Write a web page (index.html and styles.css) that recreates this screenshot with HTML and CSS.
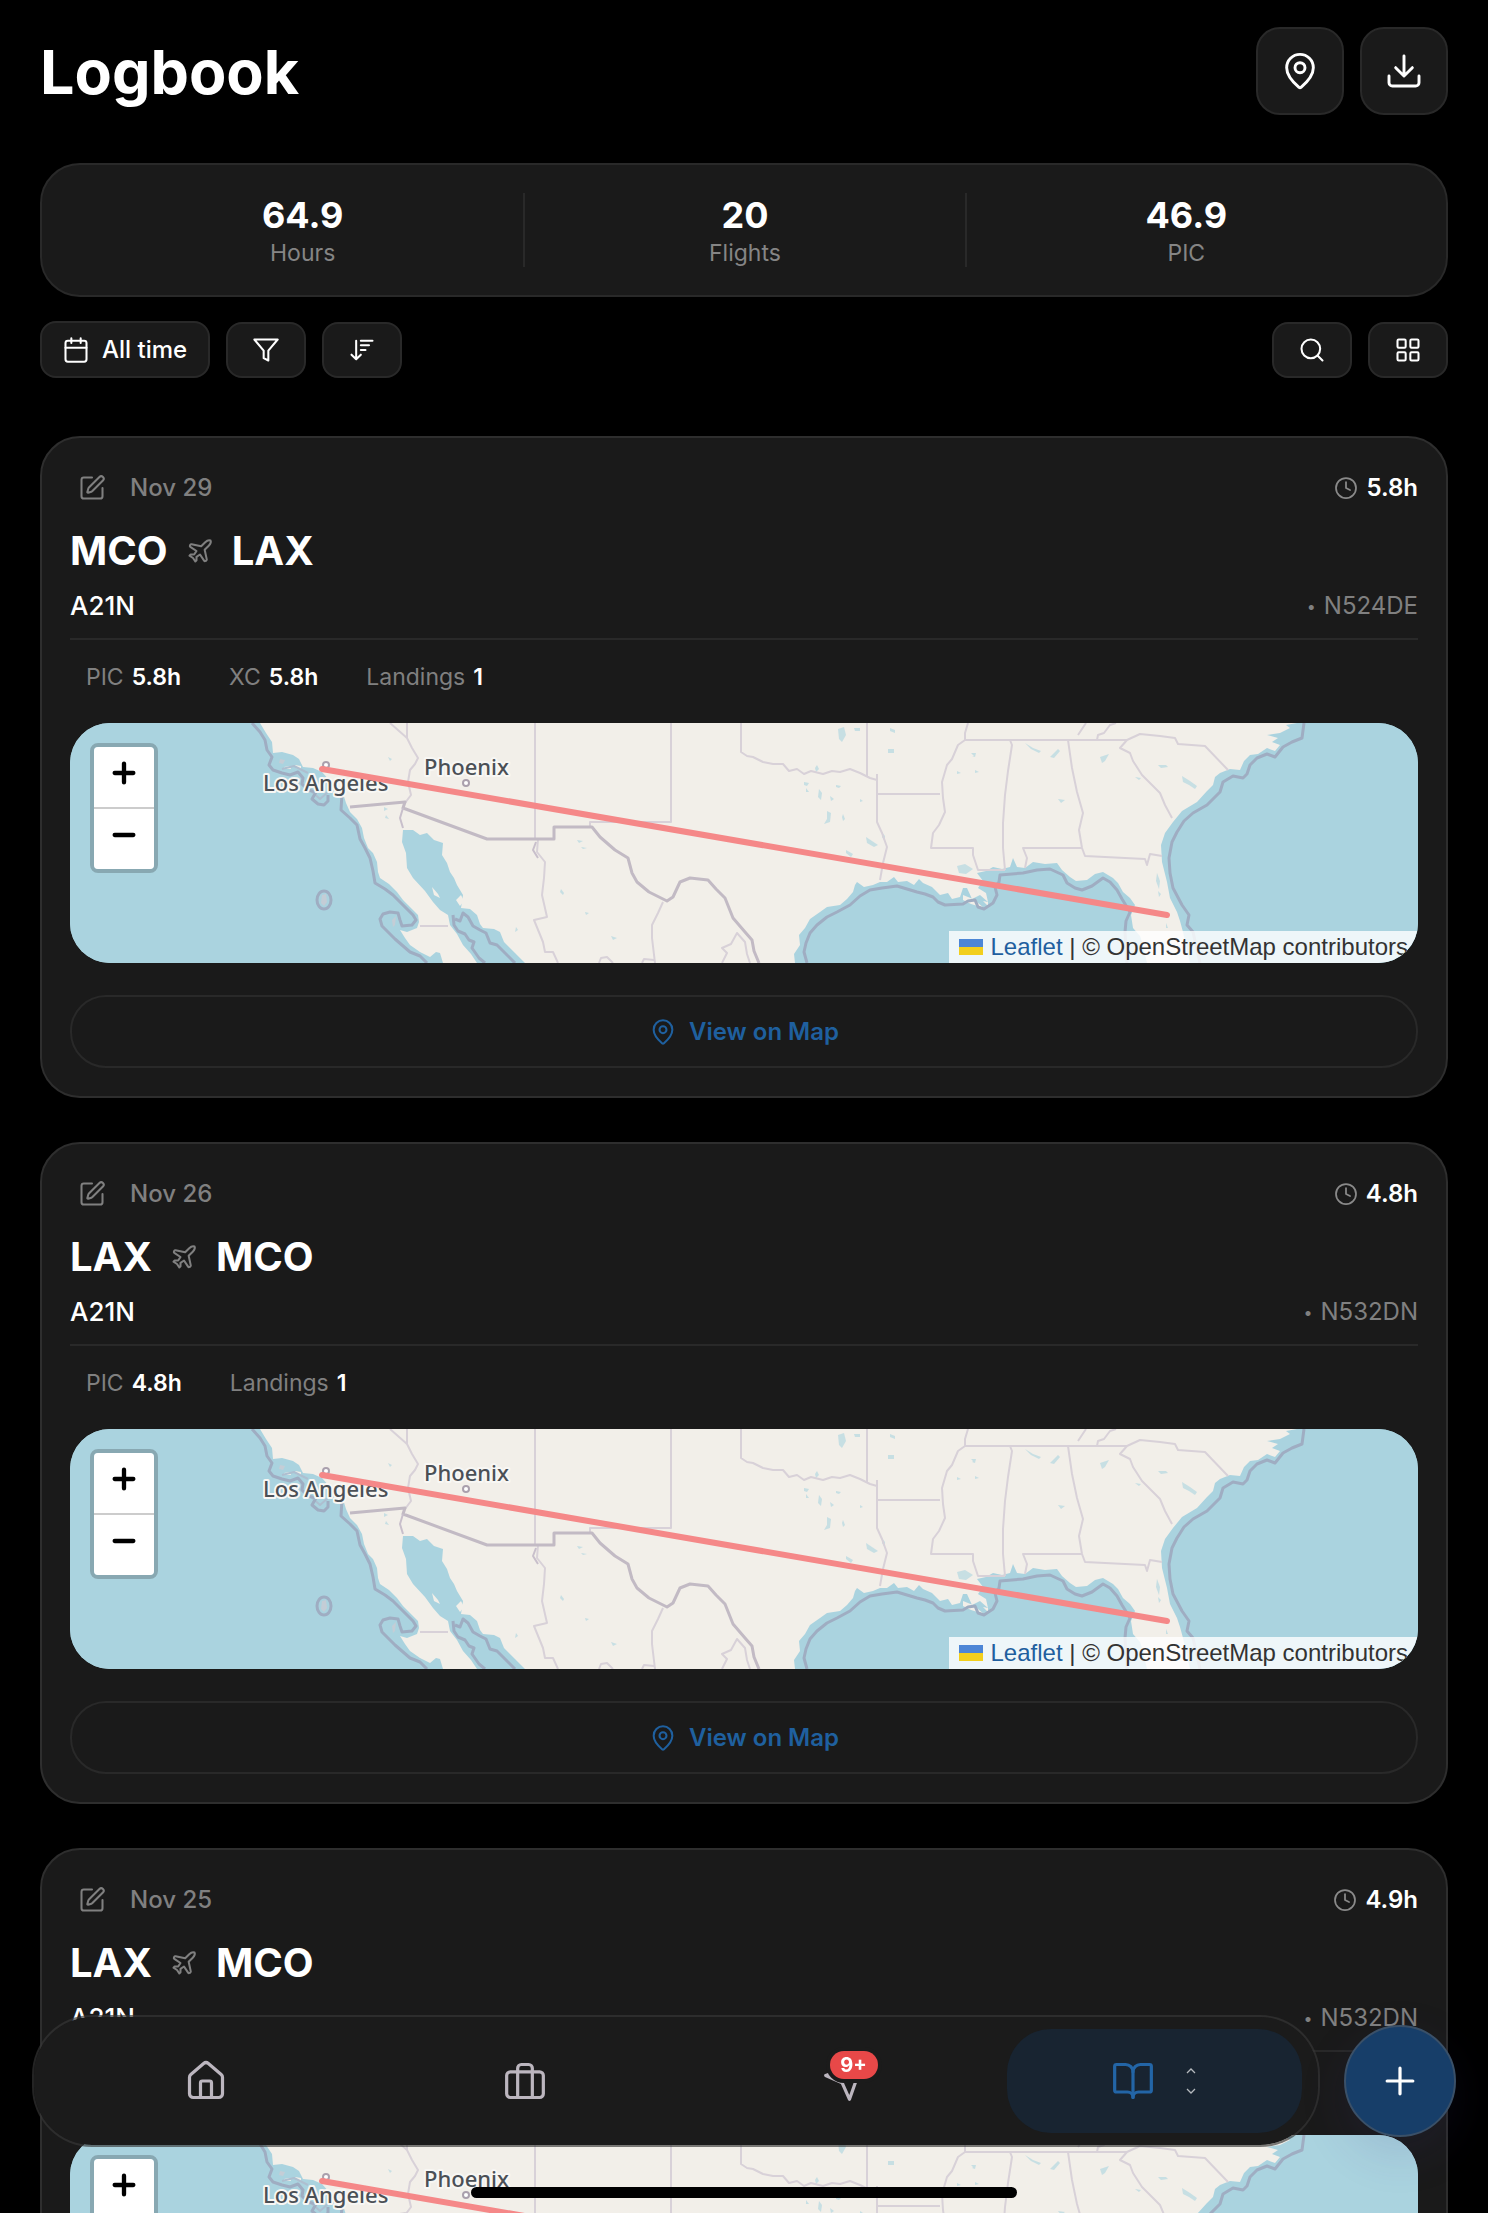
FILE: index.html
```html
<!DOCTYPE html>
<html lang="en">
<head>
<meta charset="utf-8">
<meta name="viewport" content="width=device-width, initial-scale=1">
<title>Logbook</title>
<link rel="stylesheet" href="styles.css">
</head>
<body>
<svg class="sprite" aria-hidden="true">
  <symbol id="i-pin" viewBox="0 0 24 24"><path d="M20 10c0 4.993-5.539 10.193-7.399 11.799a1 1 0 0 1-1.202 0C9.539 20.193 4 14.993 4 10a8 8 0 0 1 16 0"/><circle cx="12" cy="10" r="3"/></symbol>
  <symbol id="i-download" viewBox="0 0 24 24"><path d="M21 15v4a2 2 0 0 1-2 2H5a2 2 0 0 1-2-2v-4M7 10l5 5 5-5M12 15V3"/></symbol>
  <symbol id="i-calendar" viewBox="0 0 24 24"><path d="M8 2v4M16 2v4M3 10h18"/><rect x="3" y="4" width="18" height="18" rx="2"/></symbol>
  <symbol id="i-filter" viewBox="0 0 24 24"><path d="M22 3H2l8 9.460V19l4 2v-8.540L22 3z"/></symbol>
  <symbol id="i-sort" viewBox="0 0 24 24"><path d="m3 16 4 4 4-4M7 20V4M11 4h10M11 8h7M11 12h4"/></symbol>
  <symbol id="i-search" viewBox="0 0 24 24"><circle cx="11" cy="11" r="8"/><path d="m21 21-4.300-4.300"/></symbol>
  <symbol id="i-grid" viewBox="0 0 24 24"><rect x="3" y="3" width="7" height="7" rx="1"/><rect x="14" y="3" width="7" height="7" rx="1"/><rect x="14" y="14" width="7" height="7" rx="1"/><rect x="3" y="14" width="7" height="7" rx="1"/></symbol>
  <symbol id="i-edit" viewBox="0 0 24 24"><path d="M12 3H5a2 2 0 0 0-2 2v14a2 2 0 0 0 2 2h14a2 2 0 0 0 2-2v-7"/><path d="M18.375 2.625a1 1 0 0 1 3 3l-9.013 9.014a2 2 0 0 1-.853.505l-2.873.840a.5.5 0 0 1-.620-.620l.840-2.873a2 2 0 0 1 .506-.852z"/></symbol>
  <symbol id="i-clock" viewBox="0 0 24 24"><circle cx="12" cy="12" r="10"/><path d="M12 6v6l4 2"/></symbol>
  <symbol id="i-plane" viewBox="0 0 24 24"><path d="M17.800 19.200 16 11l3.500-3.500C21 6 21.500 4 21 3c-1-.5-3 0-4.500 1.500L13 8 4.800 6.200c-.5-.1-.9.1-1.100.5l-.3.5c-.2.5-.1 1 .3 1.300L9 12l-2 3H4l-1 1 3 2 2 3 1-1v-3l3-2 3.500 5.300c.3.4.8.5 1.300.2l.5-.2c.4-.3.6-.7.5-1.200z"/></symbol>
  <symbol id="i-home" viewBox="0 0 24 24"><path d="M15 21v-8a1 1 0 0 0-1-1h-4a1 1 0 0 0-1 1v8"/><path d="M3 10a2 2 0 0 1 .709-1.528l7-5.999a2 2 0 0 1 2.582 0l7 5.999A2 2 0 0 1 21 10v9a2 2 0 0 1-2 2H5a2 2 0 0 1-2-2z"/></symbol>
  <symbol id="i-case" viewBox="0 0 24 24"><rect x="2" y="7" width="20" height="14" rx="2"/><path d="M16 21V5a2 2 0 0 0-2-2h-4a2 2 0 0 0-2 2v16"/></symbol>
  <symbol id="i-send" viewBox="0 0 24 24"><path d="M22 2 11 13M22 2l-7 20-4-9-9-4z"/></symbol>
  <symbol id="i-book" viewBox="0 0 24 24"><path d="M12 7v14"/><path d="M3 18a1 1 0 0 1-1-1V4a1 1 0 0 1 1-1h5a4 4 0 0 1 4 4 4 4 0 0 1 4-4h5a1 1 0 0 1 1 1v13a1 1 0 0 1-1 1h-6a3 3 0 0 0-3 3 3 3 0 0 0-3-3z"/></symbol>
  <symbol id="i-plus" viewBox="0 0 24 24"><path d="M5 12h14M12 5v14"/></symbol>
  <symbol id="i-minus" viewBox="0 0 24 24"><path d="M5 12h14"/></symbol>
  <symbol id="i-updown" viewBox="0 0 16 28"><path d="m4 6 4-4 4 4M4 22l4 4 4-4"/></symbol>
  <symbol id="terrain" viewBox="0 0 1348 240">
    <rect width="1348" height="240" fill="#aad3df"/>
    <path fill="#f2efe9" d="M190 0L196 10 202 19 203 30 212 29 223 32 229 36 233 44 243 45 252 49 260 58 273 70 276 80 280 89 287 96 292 105 294 115 298 125 303 130 307 139 308 149 310 155 319 161 327 169 333 177 338 182 348 192 349 199 347 205 342 207 337 209 330 207 335 215 340 222 350 229 360 234 366 229 370 230 373 240 407 240 401 231 393 222 387 211 380 202 378 192 370 187 363 179 355 168 343 155 337 145 336 130 332 119 333 107 343 107 350 112 357 110 364 117 373 120 372 132 377 140 380 149 384 155 387 162 393 172 391 185 400 186 407 192 410 201 413 205 424 206 430 209 434 219 445 230 455 240 725 240 724 231 730 222 729 212 735 205 740 196 750 189 757 184 770 182 777 176 783 169 785 162 787 159 794 164 803 162 810 159 817 159 824 154 828 159 837 158 844 162 849 156 853 160 862 164 870 172 878 170 882 176 890 174 893 165 897 165 902 176 910 172 918 179 916 170 908 165 913 158 907 150 916 148 923 144 932 146 940 144 943 135 947 144 955 145 963 139 975 141 987 140 992 147 1000 154 1006 158 1017 157 1025 151 1033 149 1043 155 1048 160 1053 169 1060 175 1065 182 1061 192 1063 205 1070 213 1072 219 1077 240 1120 240 1113 209 1110 198 1107 189 1100 175 1097 159 1092 139 1091 122 1095 110 1103 99 1112 88 1127 79 1137 68 1143 62 1145 54 1150 50 1160 46 1170 47 1174 38 1180 32 1188 31 1197 25 1205 28 1210 22 1202 19 1208 15 1197 12 1210 10 1220 5 1216 2 1227 0Z"/>
    <g fill="#aad3df" opacity=".6">
      <path d="M768 6l6-2 2 8-4 7-3-3zM784 5l6 0 0 3-5 0zM818 26l6 0 0 4-6 0zM820 5l5 2 0 3-5-2zM747 42l2 4-3 3-1-4zM734 59l5 1-2 3-3-1zM749 66l3 4-1 7-3-3zM736 65l3 4-3 0zM757 88l4 2-1 9-6 2 3-5zM760 73l4 3-3 2zM773 91l2 5-2 2-1-4zM796 114l6 4 6 4-4 2-7-4zM776 127l7 4-2 3-5-4zM812 109l3 4 0 6-3-5zM766 62l5 1-2 2-3-1zM507 117l6 1-4 2zM511 124l6 1-4 1zM491 166l3 4-1 2-3-3zM515 189l4 1-3 2zM541 213l6 2-4 2zM446 204l2 3-3 2zM887 143l8-2 8 5-7 5-7-1zM887 48l4 2-4 1zM902 33l4-3-1 4zM901 30l5 0-2 3zM1030 34l9-3-4 7-3 2zM1088 42l8 0 2 2-7 1zM1112 53l8 5 7 5-2 3-6-4-6-3zM980 34l8-8 2 2-6 7zM955 20l8 5 8 3-2 2-8-4zM988 76l7 1-4 3zM905 47l4 2-4 1zM1087 150l3 8-1 8-3-8zM1088 168l3 3-2 3zM1096 200l2 5-2 0zM314 84l4 2-4 2zM316 92l3 4-4-1zM318 34l4 2-2 2zM1065 54l6 1-2 2zM790 76l3 2-3 1z"/>
    </g>
    <g fill="#f2efe9"><path d="M214 44l6-1 1 3-6 0zM225 42l6 1 0 3-5-1zM362 164l6 7 2 4-6-3zM386 177l5-5 3 6-4 5zM893 172l10 4 11 9-13-4-8-4zM913 178l5 1 0 4z"/></g>
    <path fill="#c4cdd6" d="M252 172l4-1 1 8-3 4-3-3zM322 197l4-4-1 9-2 2zM210 36l5 1-2 4-4-1z"/>
    <g class="map-halo"><path d="M212 46l12-3 14 7M240 67l10 9 8-7"/></g>
    <g class="map-state">
      <path d="M320 0L337 15M337 0L337 15 342 25 348 35 345 41 340 47 338 59 341 72 335 80M465 0V116M601 0V99H520V104M671 0V29L677 33 683 34 693 39 703 41 713 41 719 48 727 46 734 51 741 48 753 51 762 48 770 49 780 46 790 50 800 55 807 57M797 0V54M807 51V99L812 110 817 124 813 140 810 157M807 71H870M898 0L895 10 895 17H1057L1050 25 1060 30 1063 38 1072 52 1082 62 1090 70 1095 82 1102 95M895 17L888 22 882 36 877 42 872 59 873 75 875 89 869 102 863 110 861 125H903V132L908 147H935M940 17L942 22 938 48 935 72 933 100 933 125 935 147M998 17L1002 45 1007 69 1013 90 1009 107 1012 125 1015 133 1075 136 1077 142 1080 131 1092 133M1012 125H953L957 135 955 145M1057 17L1070 11 1090 13 1105 15 1108 21 1135 23 1158 47M1027 17L1028 12 1034 10 1040 2 1046 0M1008 12L1016 0"/>
      <path d="M468 116L467 129 475 139 474 155 472 172 477 194 464 197 473 219 475 229 483 229 488 240M593 179L588 190 582 202 582 215 585 240M572 240l2-4 10 1M529 240l2-5 6-1 6 6M652 240L657 230 652 225 661 221 667 210 675 219 677 231 680 240M350 203H378"/>
    </g>
    <path class="map-border" d="M280 84L335 79 333 85 417 116H484V104H522L530 114 545 127 558 135 562 150 567 159 579 169 597 178 603 174 610 159 620 155 638 157 646 166 655 175 663 195 675 209 682 217 684 228 689 240"/>
    <path class="map-line" d="M333 85L330 95 333 105M466 119l-3 8 5 8"/>
    <g class="map-shore">
      <path d="M182 0L190 9 195 17 197 27 202 34 199 42 203 47 212 50 220 52 228 49 233 55 232 61 238 67 246 69 242 76 248 81 254 82 258 78 258 72M272 70L271 87 280 95 287 102 290 116 295 125 300 135 303 148 305 160 315 166 323 172 333 182 343 192 346 197 342 202 332 203 330 197 328 190 320 189 313 191 310 196 312 203 325 216 340 229 350 233 357 240M383 192L384 202 388 208 395 211 399 217 404 219 402 225 409 235 415 240M385 196L390 198 393 190 398 194 403 203 410 207 416 210 420 220 427 222 435 230 445 240"/>
      <path d="M737 240L734 229 736 220 740 210 747 202 757 194 767 189 780 182 790 173 800 167 812 165 827 163 837 166 847 169 855 171 863 174 868 179 875 182 893 181 898 178 905 177 908 184 914 186 923 180 927 172 925 164 929 159 930 152 953 150 967 147 980 146 993 152 997 160 1005 165 1012 167 1022 163 1033 155 1040 159 1047 167 1052 176 1060 189 1056 198 1055 209 1057 240M1130 240L1123 209 1117 202 1119 192 1112 182 1103 165 1100 150 1099 135 1102 119 1107 109 1114 98 1123 90 1137 82 1150 69 1153 59 1163 53 1173 55 1177 51 1180 42 1187 35 1197 31 1205 34 1213 24 1222 19 1232 15 1234 0"/>
      <ellipse cx="254" cy="177" rx="7" ry="9"/>
    </g>
  </symbol>
</svg>

<main class="app">
  <header class="top">
    <h1>Logbook</h1>
    <div class="top-actions">
      <button class="big-btn" type="button" aria-label="Map"><svg class="ic ic-40"><use href="#i-pin"/></svg></button>
      <button class="big-btn" type="button" aria-label="Export"><svg class="ic ic-40"><use href="#i-download"/></svg></button>
    </div>
  </header>

  <section class="stats">
    <div class="stat"><strong>64.9</strong><span>Hours</span></div>
    <div class="stat"><strong>20</strong><span>Flights</span></div>
    <div class="stat"><strong>46.9</strong><span>PIC</span></div>
  </section>

  <div class="toolbar">
    <button class="tool tool-wide" type="button"><svg class="ic ic-28"><use href="#i-calendar"/></svg>All time</button>
    <button class="tool" type="button" aria-label="Filter"><svg class="ic ic-28"><use href="#i-filter"/></svg></button>
    <button class="tool" type="button" aria-label="Sort"><svg class="ic ic-28"><use href="#i-sort"/></svg></button>
    <span class="spacer"></span>
    <button class="tool" type="button" aria-label="Search"><svg class="ic ic-28"><use href="#i-search"/></svg></button>
    <button class="tool" type="button" aria-label="Grid view"><svg class="ic ic-28"><use href="#i-grid"/></svg></button>
  </div>

  <div class="flights">
    <article class="card">
      <div class="row head">
        <button class="edit" type="button" aria-label="Edit flight"><svg class="ic ic-28"><use href="#i-edit"/></svg></button>
        <time>Nov 29</time>
        <span class="dur"><svg class="ic ic-24"><use href="#i-clock"/></svg>5.8h</span>
      </div>
      <h2 class="route"><span>MCO</span><svg class="ic ic-28"><use href="#i-plane"/></svg><span>LAX</span></h2>
      <div class="row craft"><span class="type">A21N</span><span class="tail"><span class="dot">•</span>N524DE</span></div>
      <ul class="facts"><li>PIC <b>5.8h</b></li><li>XC <b>5.8h</b></li><li>Landings <b>1</b></li></ul>
      <div class="map">
        <svg class="map-art" viewBox="0 0 1348 240" preserveAspectRatio="xMidYMid slice">
          <use href="#terrain" width="1348" height="240"/>
          <circle class="city" cx="256" cy="42" r="3"/><circle class="city" cx="396" cy="60" r="3"/>
          <text class="city-name" x="193" y="68">Los Angeles</text><text class="city-name" x="354" y="52">Phoenix</text>
          <path class="track" d="M252 46L1097 192"/>
        </svg>
        <div class="zoom"><button type="button" aria-label="Zoom in"><svg class="ic ic-32"><use href="#i-plus"/></svg></button><button type="button" aria-label="Zoom out"><svg class="ic ic-32"><use href="#i-minus"/></svg></button></div>
        <div class="credit"><svg class="flag" viewBox="0 0 24 16"><path fill="#4c86d6" d="M0 0h24v8H0z"/><path fill="#f2cf1d" d="M0 8h24v8H0z"/></svg><span><a href="#leaflet">Leaflet</a> | © OpenStreetMap contributors</span></div>
      </div>
      <button class="view" type="button"><svg class="ic ic-28"><use href="#i-pin"/></svg>View on Map</button>
    </article>

    <article class="card">
      <div class="row head">
        <button class="edit" type="button" aria-label="Edit flight"><svg class="ic ic-28"><use href="#i-edit"/></svg></button>
        <time>Nov 26</time>
        <span class="dur"><svg class="ic ic-24"><use href="#i-clock"/></svg>4.8h</span>
      </div>
      <h2 class="route"><span>LAX</span><svg class="ic ic-28"><use href="#i-plane"/></svg><span>MCO</span></h2>
      <div class="row craft"><span class="type">A21N</span><span class="tail"><span class="dot">•</span>N532DN</span></div>
      <ul class="facts"><li>PIC <b>4.8h</b></li><li>Landings <b>1</b></li></ul>
      <div class="map">
        <svg class="map-art" viewBox="0 0 1348 240" preserveAspectRatio="xMidYMid slice">
          <use href="#terrain" width="1348" height="240"/>
          <circle class="city" cx="256" cy="42" r="3"/><circle class="city" cx="396" cy="60" r="3"/>
          <text class="city-name" x="193" y="68">Los Angeles</text><text class="city-name" x="354" y="52">Phoenix</text>
          <path class="track" d="M252 46L1097 192"/>
        </svg>
        <div class="zoom"><button type="button" aria-label="Zoom in"><svg class="ic ic-32"><use href="#i-plus"/></svg></button><button type="button" aria-label="Zoom out"><svg class="ic ic-32"><use href="#i-minus"/></svg></button></div>
        <div class="credit"><svg class="flag" viewBox="0 0 24 16"><path fill="#4c86d6" d="M0 0h24v8H0z"/><path fill="#f2cf1d" d="M0 8h24v8H0z"/></svg><span><a href="#leaflet">Leaflet</a> | © OpenStreetMap contributors</span></div>
      </div>
      <button class="view" type="button"><svg class="ic ic-28"><use href="#i-pin"/></svg>View on Map</button>
    </article>

    <article class="card">
      <div class="row head">
        <button class="edit" type="button" aria-label="Edit flight"><svg class="ic ic-28"><use href="#i-edit"/></svg></button>
        <time>Nov 25</time>
        <span class="dur"><svg class="ic ic-24"><use href="#i-clock"/></svg>4.9h</span>
      </div>
      <h2 class="route"><span>LAX</span><svg class="ic ic-28"><use href="#i-plane"/></svg><span>MCO</span></h2>
      <div class="row craft"><span class="type">A21N</span><span class="tail"><span class="dot">•</span>N532DN</span></div>
      <div class="facts"></div>
      <div class="map">
        <svg class="map-art" viewBox="0 0 1348 240" preserveAspectRatio="xMidYMid slice">
          <use href="#terrain" width="1348" height="240"/>
          <circle class="city" cx="256" cy="42" r="3"/><circle class="city" cx="396" cy="60" r="3"/>
          <text class="city-name" x="193" y="68">Los Angeles</text><text class="city-name" x="354" y="52">Phoenix</text>
          <path class="track" d="M252 46L1097 192"/>
        </svg>
        <div class="zoom"><button type="button" aria-label="Zoom in"><svg class="ic ic-32"><use href="#i-plus"/></svg></button><button type="button" aria-label="Zoom out"><svg class="ic ic-32"><use href="#i-minus"/></svg></button></div>
      </div>
    </article>
  </div>
</main>

<div class="dock">
  <nav class="tabs">
    <a class="tab" href="#home" aria-label="Home"><svg class="ic ic-44"><use href="#i-home"/></svg></a>
    <a class="tab" href="#trips" aria-label="Trips"><svg class="ic ic-44"><use href="#i-case"/></svg></a>
    <a class="tab" href="#messages" aria-label="Messages"><span class="tab-icon"><svg class="ic ic-44"><use href="#i-send"/></svg><span class="badge">9+</span></span></a>
    <a class="tab active" href="#logbook" aria-label="Logbook"><svg class="ic ic-44"><use href="#i-book"/></svg><svg class="updown"><use href="#i-updown"/></svg></a>
  </nav>
  <button class="fab" type="button" aria-label="Add flight"><svg class="ic ic-44"><use href="#i-plus"/></svg></button>
</div>
<div class="home-bar"></div>
</body>
</html>
```
FILE: styles.css
```css
* { box-sizing: border-box; }

body {
  margin: 0;
  background: #000;
  color: #fff;
  font-family: Inter, "Liberation Sans", sans-serif;
}

button {
  margin: 0;
  padding: 0;
  font: inherit;
  color: inherit;
  cursor: pointer;
}

h1, h2, ul { margin: 0; padding: 0; }

.sprite { display: none; }

.ic {
  flex: none;
  display: block;
  fill: none;
  stroke: currentColor;
  stroke-width: 1.75;
  stroke-linecap: round;
  stroke-linejoin: round;
}
.ic-24 { width: 24px; height: 24px; }
.ic-28 { width: 28px; height: 28px; }
.ic-32 { width: 32px; height: 32px; }
.ic-40 { width: 40px; height: 40px; }
.ic-44 { width: 44px; height: 44px; }

.app {
  height: 100vh;
  padding: 27px 40px 0;
  overflow-y: auto;
  scrollbar-width: none;
}

.top {
  display: flex;
  align-items: center;
  justify-content: space-between;
  margin-bottom: 48px;
}
h1 { padding-top: 2px; font-size: 61px; line-height: 80px; font-weight: 700; }
.top-actions { display: flex; gap: 16px; }

.big-btn, .tool {
  display: flex;
  align-items: center;
  justify-content: center;
  background: #1a1a1a;
  border: 2px solid #292929;
}
.big-btn { width: 88px; height: 88px; border-radius: 24px; }

.stats {
  display: grid;
  grid-template-columns: repeat(3, 1fr);
  padding: 28px 40px;
  margin-bottom: 24px;
  background: #1a1a1a;
  border: 2px solid #292929;
  border-radius: 40px;
}
.stat {
  display: flex;
  flex-direction: column;
  align-items: center;
  gap: 2px;
}
.stat + .stat { border-left: 2px solid #292929; }
.stat strong { font-size: 36px; line-height: 44px; font-weight: 700; }
.stat span { font-size: 23px; line-height: 28px; color: #858585; }

.toolbar { display: flex; align-items: flex-end; gap: 16px; margin-bottom: 58px; }
.tool { width: 80px; height: 56px; border-radius: 16px; }
.tool-wide {
  width: auto;
  height: 57px;
  gap: 12px;
  padding: 0 21px 0 20px;
  font-size: 24px;
  font-weight: 500;
}
.spacer { flex: 1; }

.flights { display: flex; flex-direction: column; gap: 44px; }

.card {
  display: flex;
  flex-direction: column;
  padding: 28px;
  background: #1a1a1a;
  border: 2px solid #2e2e2e;
  border-radius: 40px;
}
.row { display: flex; align-items: center; }

.head { gap: 16px; color: #808080; font-size: 24px; line-height: 44px; font-weight: 500; }
.edit { padding: 8px; border: 0; background: none; }
.dur {
  display: flex;
  align-items: center;
  gap: 8px;
  margin-left: auto;
  color: #fff;
  font-weight: 600;
}
.dur .ic { color: #8a8a8a; }

.route {
  display: flex;
  align-items: center;
  gap: 18px;
  padding: 17px 0 15px;
  font-size: 40px;
  line-height: 48px;
  font-weight: 700;
}
.route .ic { color: #808080; }

.craft {
  justify-content: space-between;
  padding-bottom: 16px;
  border-bottom: 2px solid #292929;
  line-height: 32px;
}
.type { font-size: 26px; font-weight: 500; }
.tail { display: flex; align-items: center; gap: 8px; font-size: 24px; color: #808080; }
.dot { font-size: 16px; }

.facts {
  display: flex;
  gap: 16px;
  height: 83px;
  padding: 23px 0;
  list-style: none;
  font-size: 23px;
  line-height: 28px;
  color: #808080;
}
.facts li { display: flex; gap: 8px; padding: 0 16px; }
.facts b { color: #fff; font-weight: 600; }

.map {
  position: relative;
  height: 240px;
  margin-bottom: 32px;
  border-radius: 40px;
  overflow: hidden;
  background: #aad3df;
}
.map-art { display: block; width: 100%; height: 100%; }
.map-state, .map-border, .map-line, .map-shore, .map-halo { fill: none; stroke-linejoin: round; }
.map-state { stroke: #d8d1d8; stroke-width: 2; }
.map-line { stroke: #c8bfcb; stroke-width: 2; }
.map-border { stroke: #c2bac4; stroke-width: 3; }
.map-shore { stroke: #9fadc2; stroke-width: 3; }
.map-halo { stroke: #aebfd0; stroke-width: 2; }
.city { fill: #fff; stroke: #aaa0ad; stroke-width: 2; }
.city-name {
  font: 500 22px "Noto Sans", sans-serif;
  fill: #4b5056;
  stroke: #f8f7f4;
  stroke-width: 4;
  stroke-linejoin: round;
  paint-order: stroke;
}
.track { fill: none; stroke: #f58888; stroke-width: 6; stroke-linecap: round; }

.zoom {
  position: absolute;
  left: 20px;
  top: 20px;
  width: 68px;
  border: 4px solid rgba(0, 0, 0, .2);
  border-radius: 8px;
}
.zoom button {
  display: flex;
  align-items: center;
  justify-content: center;
  width: 100%;
  height: 60px;
  padding-bottom: 8px;
  border: 0;
  border-radius: 0 0 4px 4px;
  background: #fff;
  color: #000;
}
.zoom button:first-child { height: 62px; border-bottom: 2px solid #ccc; border-radius: 4px 4px 0 0; }
.zoom .ic { stroke-width: 3.25; }

.credit {
  position: absolute;
  right: 0;
  bottom: 0;
  display: flex;
  align-items: center;
  gap: 8px;
  padding: 0 10px;
  background: rgba(255, 255, 255, .8);
  color: #333;
  font: 24px/32px "Liberation Sans", Arial, sans-serif;
}
.credit a { color: #1f5f9f; text-decoration: none; }
.flag { width: 24px; height: 16px; }

.view {
  display: flex;
  align-items: center;
  justify-content: center;
  gap: 12px;
  height: 73px;
  border: 2px solid #292929;
  border-radius: 36px;
  background: none;
  color: #1f609f;
  font-size: 24px;
  font-weight: 600;
}

.dock {
  position: fixed;
  left: 32px;
  right: 32px;
  bottom: 66px;
  display: flex;
  align-items: center;
  gap: 24px;
}
.tabs {
  flex: 1;
  display: grid;
  grid-template-columns: 311fr 311fr 311fr 295fr;
  gap: 8px;
  height: 132px;
  padding: 12px 16px;
  border: 2px solid rgba(56, 56, 56, .65);
  border-radius: 60px;
  background: #1b1b1b padding-box;
}
.tab {
  display: flex;
  align-items: center;
  justify-content: center;
  gap: 28px;
  border-radius: 44px;
  color: #bcb6bf;
}
.tab.active { background: #182431; color: #2365a6; }
.updown {
  width: 16px;
  height: 28px;
  fill: none;
  stroke: #b5b9bd;
  stroke-width: 1.25;
}
.tab-icon { position: relative; }
.badge {
  position: absolute;
  left: 8px;
  top: -8px;
  width: 48px;
  border-radius: 14px;
  background: #e84848;
  box-shadow: 0 0 0 4px #1b1b1b;
  color: #fff;
  font-size: 20px;
  line-height: 28px;
  font-weight: 700;
  text-align: center;
}

.fab {
  display: flex;
  align-items: center;
  justify-content: center;
  width: 112px;
  height: 112px;
  border: 2px solid #3a5068;
  border-radius: 50%;
  background: #173e69;
  box-shadow: 0 16px 48px rgba(60, 50, 130, .14);
}

.home-bar {
  position: fixed;
  left: 50%;
  bottom: 15px;
  width: 546px;
  height: 11px;
  margin-left: -273px;
  border-radius: 6px;
  background: #000;
}
```
